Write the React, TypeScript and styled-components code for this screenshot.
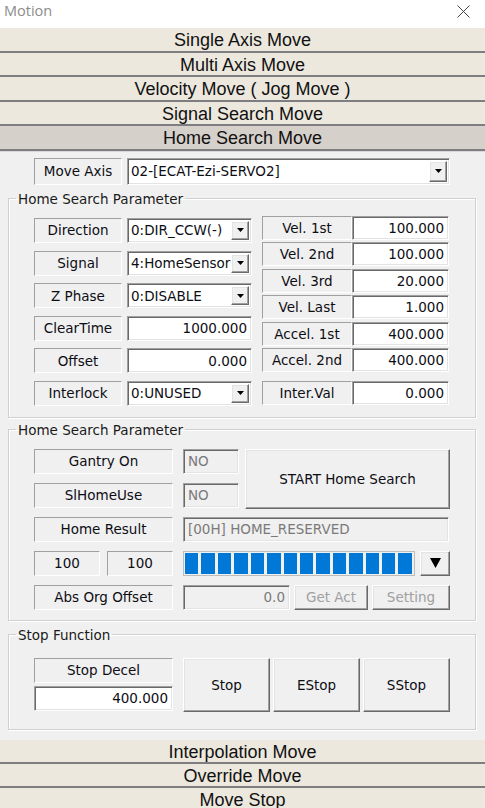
import styled, { createGlobalStyle, css } from 'styled-components'

const GlobalStyle = createGlobalStyle`
  html, body {
    margin: 0;
    padding: 0;
    background: #f0f0f0;
  }
  body {
    font-family: "DejaVu Sans", Verdana, sans-serif;
    font-size: 13.5px;
    color: #0d0d14;
  }
  #root {
    width: 485px;
    height: 808px;
    overflow: hidden;
  }
  * {
    box-sizing: border-box;
  }
`

const sunken = css`
  border: 1px solid;
  border-color: #a0a0a0 #ffffff #ffffff #a0a0a0;
  box-shadow: inset 1px 1px 0 #696969, inset -1px -1px 0 #e3e3e3;
`

const raised = css`
  border: 1px solid;
  border-color: #ffffff #696969 #696969 #ffffff;
  box-shadow: inset -1px -1px 0 #a0a0a0, inset 1px 1px 0 #e3e3e3;
`

const Window = styled.div`
  width: 485px;
  height: 808px;
  display: flex;
  flex-direction: column;
  background: #f0f0f0;
`

const TitleBar = styled.div`
  height: 28px;
  flex: none;
  background: #fff;
  display: flex;
  justify-content: space-between;
  align-items: flex-start;
  padding: 2px 15px 0 4px;
`

const Title = styled.span`
  font-family: "Open Sans", "Noto Sans", sans-serif;
  font-size: 14.5px;
  line-height: 18px;
  color: #8c8c8c;
`

const CloseIcon = styled.svg`
  margin-top: 3px;
  width: 13px;
  height: 13px;
`

const Bar = styled.div<{ $active?: boolean; $h?: number }>`
  flex: none;
  height: ${(p) => p.$h ?? 24.6}px;
  padding-top: 1px;
  background: ${(p) => (p.$active ? '#d5d0c9' : '#ece8de')};
  border-bottom: 2px solid #7e7e82;
  box-shadow: 0 1px 0 #d8d8d8;
  font-family: "Liberation Sans", Arial, sans-serif;
  font-size: 18px;
  line-height: 22px;
  text-align: center;
  color: #111;
  overflow: hidden;
`

const Panel = styled.div`
  flex: none;
  height: 589px;
  padding-top: 7px;
  display: flex;
  flex-direction: column;
`

const AxisRow = styled.div`
  display: flex;
  gap: 5px;
  padding-left: 34px;
  height: 27px;
`

const Label = styled.div<{ $w?: number }>`
  width: ${(p) => (p.$w ? `${p.$w}px` : 'auto')};
  flex: none;
  height: 100%;
  border: 1px solid;
  border-color: #a0a0a0 #ffffff #ffffff #a0a0a0;
  background: #f0f0f0;
  display: flex;
  align-items: center;
  justify-content: center;
  white-space: nowrap;
`

const Combo = styled.div<{ $w: number }>`
  width: ${(p) => p.$w}px;
  flex: none;
  height: 100%;
  ${sunken};
  background: #fff;
  display: flex;
  align-items: stretch;
  padding: 2px 2px 2px 3px;
`

const ComboText = styled.span`
  flex: 1;
  display: flex;
  align-items: center;
  overflow: hidden;
  white-space: nowrap;
`

const ArrowButton = styled.div<{ $w?: number }>`
  width: ${(p) => p.$w ?? 18}px;
  flex: none;
  ${raised};
  background: #f0f0f0;
  display: flex;
  align-items: center;
  justify-content: center;
`

const Field = styled.div<{ $w?: number; $disabled?: boolean; $left?: boolean }>`
  width: ${(p) => (p.$w ? `${p.$w}px` : 'auto')};
  flex: ${(p) => (p.$w ? 'none' : '1')};
  height: 100%;
  ${sunken};
  background: ${(p) => (p.$disabled ? '#f0f0f0' : '#fff')};
  color: ${(p) => (p.$disabled ? '#7a7a7a' : '#0d0d14')};
  display: flex;
  align-items: center;
  justify-content: ${(p) => (p.$left ? 'flex-start' : 'flex-end')};
  padding: 0 4px;
  white-space: nowrap;
`

const Group = styled.fieldset<{ $top: number }>`
  margin: ${(p) => p.$top}px 9px 0 8px;
  padding: 0;
  border: 1px solid #d0d0d0;
  box-shadow: inset 1px 1px 0 #fff, 1px 1px 0 #fff;
  min-width: 0;
`

const Legend = styled.legend`
  margin-left: 7px;
  padding: 0 2px;
  line-height: 16px;
  color: #1a1a1a;
`

const GroupBody = styled.div<{ $pad: string }>`
  padding: ${(p) => p.$pad};
`

const ParamGrid = styled.div`
  display: flex;
  gap: 10px;
`

const LeftCol = styled.div`
  width: 218px;
  padding-top: 2px;
  display: flex;
  flex-direction: column;
  gap: 7.6px;
`

const RightCol = styled.div`
  width: 187px;
  display: flex;
  flex-direction: column;
  gap: 2.4px;
`

const Row = styled.div<{ $h: number; $gap?: number; $mt?: number }>`
  display: flex;
  height: ${(p) => p.$h}px;
  gap: ${(p) => p.$gap ?? 0}px;
  margin-top: ${(p) => p.$mt ?? 0}px;
`

const Stack = styled.div<{ $gap: number; $w?: number }>`
  display: flex;
  flex-direction: column;
  gap: ${(p) => p.$gap}px;
  width: ${(p) => (p.$w ? `${p.$w}px` : 'auto')};
  flex: none;
`

const Button = styled.button<{ $w: number; $h?: number; $disabled?: boolean }>`
  width: ${(p) => p.$w}px;
  height: ${(p) => (p.$h ? `${p.$h}px` : '100%')};
  flex: none;
  ${raised};
  background: #f0f0f0;
  font: inherit;
  color: ${(p) => (p.$disabled ? '#a0a0a0' : '#0d0d14')};
  padding: 0;
  display: flex;
  align-items: center;
  justify-content: center;
`

const Progress = styled.div`
  width: 232px;
  flex: none;
  height: 100%;
  border: 1px solid #bcbcbc;
  background: #f0f0f0;
  padding: 1px 2px 1px 1px;
  display: flex;
  gap: 3px;
`

const Block = styled.div`
  flex: 1;
  background: #0078d7;
`

const SmallArrow = () => (
  <svg width="7" height="4" viewBox="0 0 7 4">
    <polygon points="0,0 7,0 3.5,4" fill="#000" />
  </svg>
)

const BigArrow = () => (
  <svg width="11" height="10" viewBox="0 0 11 10">
    <polygon points="0,0 11,0 5.5,10" fill="#000" />
  </svg>
)

const topBars = ['Single Axis Move', 'Multi Axis Move', 'Velocity Move ( Jog Move )', 'Signal Search Move']

const leftParams = [
  { label: 'Direction', value: '0:DIR_CCW(-)', combo: true },
  { label: 'Signal', value: '4:HomeSensor', combo: true },
  { label: 'Z Phase', value: '0:DISABLE', combo: true },
  { label: 'ClearTime', value: '1000.000' },
  { label: 'Offset', value: '0.000' },
  { label: 'Interlock', value: '0:UNUSED', combo: true },
]

const rightParams = [
  { label: 'Vel. 1st', value: '100.000' },
  { label: 'Vel. 2nd', value: '100.000' },
  { label: 'Vel. 3rd', value: '20.000' },
  { label: 'Vel. Last', value: '1.000' },
  { label: 'Accel. 1st', value: '400.000' },
  { label: 'Accel. 2nd', value: '400.000' },
]

export default function App() {
  return (
    <>
      <GlobalStyle />
      <Window>
        <TitleBar>
          <Title>Motion</Title>
          <CloseIcon viewBox="0 0 13 13">
            <path d="M0.5 0.5 L12.5 12.5 M12.5 0.5 L0.5 12.5" stroke="#444" strokeWidth="1" fill="none" />
          </CloseIcon>
        </TitleBar>

        {topBars.map((t) => (
          <Bar key={t}>{t}</Bar>
        ))}
        <Bar $active>Home Search Move</Bar>

        <Panel>
          <AxisRow>
            <Label $w={88}>Move Axis</Label>
            <Combo $w={323}>
              <ComboText>02-[ECAT-Ezi-SERVO2]</ComboText>
              <ArrowButton>
                <SmallArrow />
              </ArrowButton>
            </Combo>
          </AxisRow>

          <Group $top={6}>
            <Legend>Home Search Parameter</Legend>
            <GroupBody $pad="9px 26px 11px 25px">
              <ParamGrid>
                <LeftCol>
                  {leftParams.map((p) => (
                    <Row key={p.label} $h={25} $gap={5}>
                      <Label $w={88}>{p.label}</Label>
                      {p.combo ? (
                        <Combo $w={125}>
                          <ComboText>{p.value}</ComboText>
                          <ArrowButton>
                            <SmallArrow />
                          </ArrowButton>
                        </Combo>
                      ) : (
                        <Field $w={125}>{p.value}</Field>
                      )}
                    </Row>
                  ))}
                </LeftCol>
                <RightCol>
                  {rightParams.map((p) => (
                    <Row key={p.label} $h={24}>
                      <Label $w={90}>{p.label}</Label>
                      <Field>{p.value}</Field>
                    </Row>
                  ))}
                  <Row $h={24} $mt={6.6}>
                    <Label $w={90}>Inter.Val</Label>
                    <Field>0.000</Field>
                  </Row>
                </RightCol>
              </ParamGrid>
            </GroupBody>
          </Group>

          <Group $top={4}>
            <Legend>Home Search Parameter</Legend>
            <GroupBody $pad="11px 25px 10px 25px">
              <Stack $gap={9}>
                <Row $h={59} $gap={6}>
                  <Stack $gap={9}>
                    <Row $h={25} $gap={10}>
                      <Label $w={139}>Gantry On</Label>
                      <Field $w={56} $disabled $left>NO</Field>
                    </Row>
                    <Row $h={25} $gap={10}>
                      <Label $w={139}>SlHomeUse</Label>
                      <Field $w={56} $disabled $left>NO</Field>
                    </Row>
                  </Stack>
                  <Button $w={205} $h={60}>START Home Search</Button>
                </Row>
                <Row $h={25} $gap={10}>
                  <Label $w={139}>Home Result</Label>
                  <Field $w={266} $disabled $left>[00H] HOME_RESERVED</Field>
                </Row>
                <Row $h={25} $gap={10}>
                  <Row $h={25} $gap={7}>
                    <Label $w={66}>100</Label>
                    <Label $w={66}>100</Label>
                  </Row>
                  <Row $h={25} $gap={5}>
                    <Progress>
                      {Array.from({ length: 14 }, (_, i) => (
                        <Block key={i} />
                      ))}
                    </Progress>
                    <ArrowButton $w={30}>
                      <BigArrow />
                    </ArrowButton>
                  </Row>
                </Row>
                <Row $h={25} $gap={10}>
                  <Label $w={139}>Abs Org Offset</Label>
                  <Row $h={25} $gap={4}>
                    <Field $w={107} $disabled>0.0</Field>
                    <Button $w={74} $disabled>Get Act</Button>
                    <Button $w={78} $disabled>Setting</Button>
                  </Row>
                </Row>
              </Stack>
            </GroupBody>
          </Group>

          <Group $top={6}>
            <Legend>Stop Function</Legend>
            <GroupBody $pad="15px 25px 17px 25px">
              <Row $h={54} $gap={10}>
                <Stack $gap={3} $w={139}>
                  <Row $h={25}>
                    <Label $w={139}>Stop Decel</Label>
                  </Row>
                  <Row $h={25}>
                    <Field $w={139}>400.000</Field>
                  </Row>
                </Stack>
                <Row $h={54} $gap={3}>
                  <Button $w={87}>Stop</Button>
                  <Button $w={87}>EStop</Button>
                  <Button $w={87}>SStop</Button>
                </Row>
              </Row>
            </GroupBody>
          </Group>
        </Panel>

        <Bar $h={24}>Interpolation Move</Bar>
        <Bar $h={24}>Override Move</Bar>
        <Bar $h={24}>Move Stop</Bar>
      </Window>
    </>
  )
}
